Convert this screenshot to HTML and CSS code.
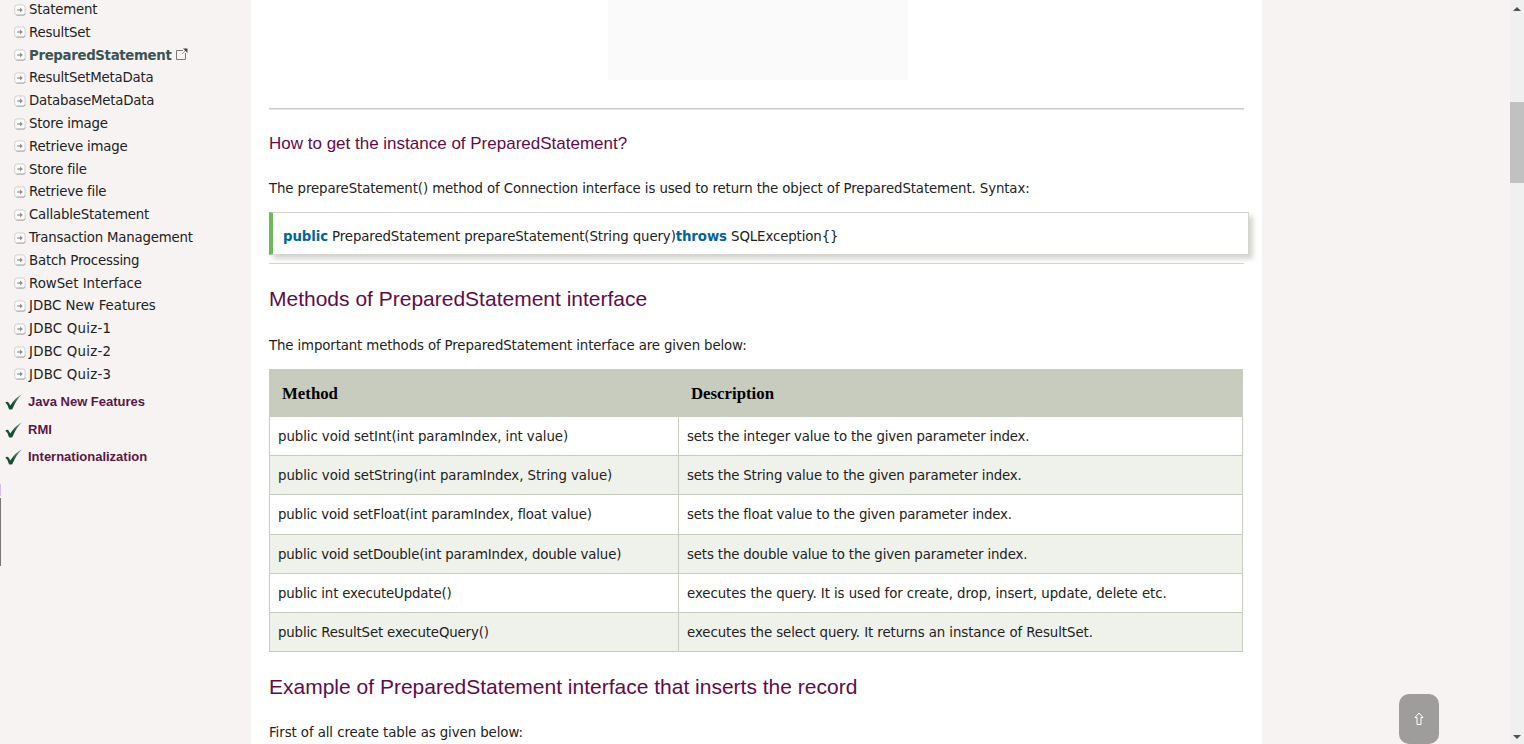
FILE: index.html
```html
<!DOCTYPE html>
<html lang="en">
<head>
<meta charset="utf-8">
<title>PreparedStatement</title>
<link rel="stylesheet" href="styles.css">
</head>
<body>
<svg class="defs" width="0" height="0">
  <symbol id="arrow" viewBox="0 0 12 12"><rect x=".7" y=".9" width="10.4" height="10.2" rx="2.500" fill="#fcfcfc" stroke="#cfcfcf"/><path d="M2.500 11.100h7.500q1.200-.3 1.200-1.500" fill="none" stroke="#a9a9a9"/><path d="M3.300 6h4" stroke="#909090" stroke-width="1.300"/><path d="M6 3.600 8.800 6 6 8.400z" fill="#909090"/></symbol>
  <symbol id="check" viewBox="0 0 18 16"><linearGradient id="g" x1="0" y1="1" x2="1" y2="0"><stop offset=".4" stop-color="#174d31"/><stop offset="1" stop-color="#84a494"/></linearGradient><path d="M.3 8.5Q2.4 7.2 3.6 8.6L5.3 11.5Q10.500 3.500 17 .3Q11.500 5.500 7.300 15.200Q5.500 16 4 15.200Q3 10.500 .3 8.500z" fill="url(#g)"/></symbol>
</svg>
<div class="page">
  <nav class="sidebar">
    <ul class="links">
      <li><svg><use href="#arrow"/></svg><a>Statement</a></li>
      <li><svg><use href="#arrow"/></svg><a>ResultSet</a></li>
      <li><svg><use href="#arrow"/></svg><a class="current">PreparedStatement</a><svg class="ext" viewBox="0 0 13 13"><path d="M8 2.500H1.500v9h9V5" fill="none" stroke="#777"/><path d="M7 6 11 2" stroke="#999"/><path d="M8 .5h4.500V5z" fill="#444"/></svg></li>
      <li><svg><use href="#arrow"/></svg><a>ResultSetMetaData</a></li>
      <li><svg><use href="#arrow"/></svg><a>DatabaseMetaData</a></li>
      <li><svg><use href="#arrow"/></svg><a>Store image</a></li>
      <li><svg><use href="#arrow"/></svg><a>Retrieve image</a></li>
      <li><svg><use href="#arrow"/></svg><a>Store file</a></li>
      <li><svg><use href="#arrow"/></svg><a>Retrieve file</a></li>
      <li><svg><use href="#arrow"/></svg><a>CallableStatement</a></li>
      <li><svg><use href="#arrow"/></svg><a>Transaction Management</a></li>
      <li><svg><use href="#arrow"/></svg><a>Batch Processing</a></li>
      <li><svg><use href="#arrow"/></svg><a class="mid">RowSet Interface</a></li>
      <li><svg><use href="#arrow"/></svg><a class="mid">JDBC New Features</a></li>
      <li><svg><use href="#arrow"/></svg><a class="wide">JDBC Quiz-1</a></li>
      <li><svg><use href="#arrow"/></svg><a class="wide">JDBC Quiz-2</a></li>
      <li><svg><use href="#arrow"/></svg><a class="wide">JDBC Quiz-3</a></li>
    </ul>
    <ul class="topics">
      <li><svg><use href="#check"/></svg><a>Java New Features</a></li>
      <li><svg><use href="#check"/></svg><a>RMI</a></li>
      <li><svg><use href="#check"/></svg><a>Internationalization</a></li>
    </ul>
    <div class="edge"></div>
  </nav>
  <main class="content">
    <div class="ad"></div>
    <hr class="rule">
    <h3>How to get the instance of PreparedStatement?</h3>
    <p class="intro">The prepareStatement() method of Connection interface is used to return the object of PreparedStatement. Syntax:</p>
    <div class="code"><b>public</b> PreparedStatement prepareStatement(String query)<b>throws</b> SQLException{}</div>
    <hr class="thin">
    <h2>Methods of PreparedStatement interface</h2>
    <p class="lead">The important methods of PreparedStatement interface are given below:</p>
    <table>
      <thead><tr><th>Method</th><th>Description</th></tr></thead>
      <tbody>
        <tr><td>public void setInt(int paramIndex, int value)</td><td class="tight">sets the integer value to the given parameter index.</td></tr>
        <tr><td>public void setString(int paramIndex, String value)</td><td class="tight">sets the String value to the given parameter index.</td></tr>
        <tr><td class="tight">public void setFloat(int paramIndex, float value)</td><td class="tight">sets the float value to the given parameter index.</td></tr>
        <tr><td class="tight">public void setDouble(int paramIndex, double value)</td><td class="tight">sets the double value to the given parameter index.</td></tr>
        <tr><td class="tight">public int executeUpdate()</td><td>executes the query. It is used for create, drop, insert, update, delete etc.</td></tr>
        <tr><td class="tight">public ResultSet executeQuery()</td><td>executes the select query. It returns an instance of ResultSet.</td></tr>
      </tbody>
    </table>
    <h2 class="example">Example of PreparedStatement interface that inserts the record</h2>
    <p class="last">First of all create table as given below:</p>
  </main>
  <aside class="right"></aside>
  <div class="scrollbar">
    <svg width="14" height="14"><path d="M3 11 7 7l4 4z" fill="#505050"/></svg>
    <div class="thumb"></div>
    <svg class="down" width="14" height="14"><path d="M3 5h8l-4 4z" fill="#505050"/></svg>
  </div>
</div>
<button class="totop"><svg width="10" height="14" viewBox="0 0 10 14"><path d="M5 1 1 5.500h2V12.500h4V5.500h2z" fill="none" stroke="#fff"/></svg></button>
</body>
</html>
```

FILE: styles.css
```css
* { box-sizing: border-box; }
body { margin: 0; height: 744px; overflow: hidden; background: #f7f3f3; font: 13.33px "DejaVu Sans", Verdana, sans-serif; letter-spacing: -.11px; color: #222; }
.defs { position: absolute; }
.page { display: flex; height: 744px; }
.sidebar { width: 251px; position: relative; flex: none; }
ul { list-style: none; margin: 0; padding: 0; }
.links { padding: 0 0 0 14px; margin-top: -1.8px; letter-spacing: -.21px; }
.links li { display: flex; align-items: center; height: 22.8px; white-space: nowrap; }
.links svg { width: 12px; height: 12px; margin-right: 3px; flex: none; }
.links .mid { letter-spacing: -.03px; }
.links .wide { letter-spacing: .24px; }
.links .current { font-weight: bold; color: #3a5455; letter-spacing: -.34px; }
.links .ext { width: 13px; height: 13px; margin: -2px 0 0 4px; }
.topics { padding: 2.4px 0 0 5px; letter-spacing: 0; }
.topics li { display: flex; align-items: center; height: 27.3px; font: bold 13px "Liberation Sans", Arial, sans-serif; color: #5a1747; }
.topics svg { width: 18px; height: 16px; margin-right: 5px; margin-top: 1px; }
.edge { position: absolute; left: 0; top: 498px; width: 1px; height: 68px; background: #777; }
.edge::before { content: ""; position: absolute; top: -14px; left: 0; width: 1px; height: 12px; background: #dcb8f5; }
.content { width: 1011px; flex: none; background: #fff; padding: 0 18px; overflow: hidden; white-space: nowrap; }
.ad { width: 300px; height: 80px; margin-left: 339px; background: #fafafa; }
hr { border: 0; margin: 0; width: 975px; }
.rule { height: 2px; margin-top: 28px; background: #e2e2e2; border-top: 1px solid #cbcbcb; }
.thin { height: 1px; margin-top: 8px; background: #d2d2d2; }
h2, h3 { font-family: "Liberation Sans", Arial, sans-serif; font-weight: normal; color: #610b4b; margin: 0; letter-spacing: 0; }
h3 { font-size: 17px; line-height: 20px; margin-top: 24px; }
h2 { font-size: 21px; line-height: 24px; margin-top: 23px; }
p { margin: 0; line-height: 18px; }
.intro { margin-top: 26px; }
.code { width: 980px; height: 43px; margin-top: 14px; padding-left: 10px; line-height: 47px; border: 1px solid #d5d5d0; border-left: 4px solid #6cbb5a; box-shadow: 4px 4px 5px #d5d5d0; background: #fff; }
.code b { color: #069; }
.lead { margin-top: 26px; letter-spacing: -.13px; }
table { width: 974px; margin-top: 14px; border-collapse: collapse; table-layout: fixed; }
thead { outline: 1px solid #c7ccbe; outline-offset: -1px; }
th { width: 409px; height: 47px; padding: 2px 12px 0; text-align: left; background: #c7ccbe; border: 1px solid #c7ccbe; font: bold 16.8px "Liberation Serif", "Times New Roman", serif; letter-spacing: 0; color: #000; }
th + th { width: auto; }
td { height: 39.2px; padding: 1px 8px 0; border: 1px solid #c7ccbe; letter-spacing: -.07px; }
td.tight { letter-spacing: -.15px; }
tbody tr:nth-child(even) { background: #eff1eb; }
.example { margin-top: 23px; }
.last { margin-top: 25px; letter-spacing: -.08px; }
.right { flex: 1; }
.scrollbar { width: 14px; background: #f0f0f0; display: flex; flex-direction: column; }
.thumb { height: 81px; margin-top: 88px; background: #c1c1c1; }
.scrollbar .down { margin-top: auto; }
.scrollbar svg { flex: none; }
.totop { position: absolute; left: 1399px; top: 694px; width: 40px; height: 50px; border: 0; border-radius: 10px; padding: 0; background: #9f9c9c; display: flex; align-items: center; justify-content: center; }
```
